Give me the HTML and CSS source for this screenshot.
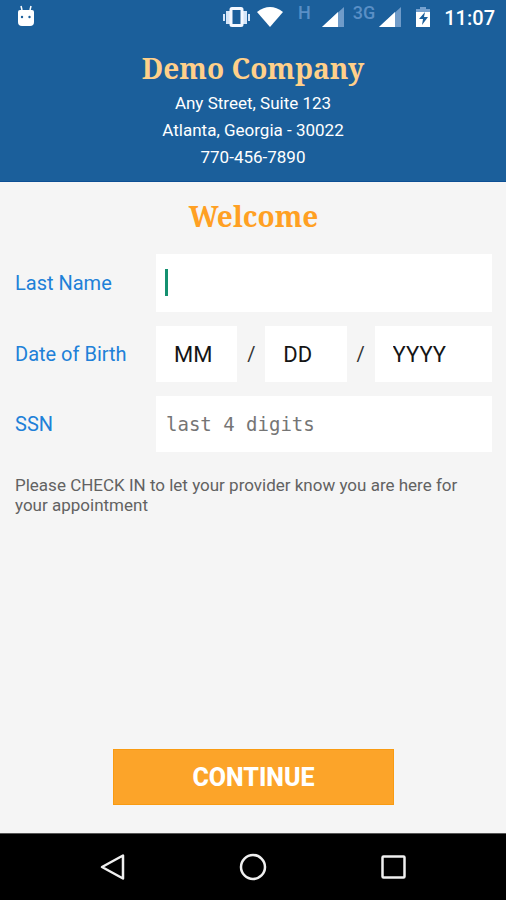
FILE: index.html
```html
<!DOCTYPE html>
<html lang="en">
<head>
<meta charset="utf-8">
<meta name="viewport" content="width=device-width, initial-scale=1">
<title>Check In</title>
<link rel="stylesheet" href="styles.css">
</head>
<body>
<div class="screen">
  <header class="header">
    <div class="status">
      <svg class="droid" width="18" height="22" viewBox="0 0 18 22" aria-hidden="true">
        <path d="M4 1l1 4M14 1l-1 4" stroke="#fff" stroke-width="1.5"/>
        <path d="M3 5h12a2 2 0 0 1 2 2v10a4 4 0 0 1-4 4H5a4 4 0 0 1-4-4V7a2 2 0 0 1 2-2z" fill="#fff"/>
        <circle cx="5" cy="12" r="1.2" fill="#1b5f9b"/><circle cx="12.500" cy="12" r="1.2" fill="#1b5f9b"/>
      </svg>
      <div class="indicators">
        <svg width="28" height="22" viewBox="0 0 28 22" aria-hidden="true">
          <path fill="#d5e5f8" d="M0 8h2v7H0zM3 5h4v13H3zM20 5h4v13h-4zM25 8h2v7h-2z"/>
          <rect x="8" y="2.500" width="11" height="17" rx="1" fill="none" stroke="#f4f8ff" stroke-width="3"/>
        </svg>
        <svg class="wifi" width="26" height="22" viewBox="0 0 26 22" aria-hidden="true"><path fill="#fff" d="M0 6Q13-4 26 6L13 21z"/></svg>
        <span class="network">H</span>
        <svg class="signal" width="22" height="22" viewBox="0 0 22 22" aria-hidden="true"><path fill="#6f9bc9" d="M22 1v20H0z"/><path fill="#fff" d="M16 6v15H0z"/></svg>
        <span class="network">3G</span>
        <svg class="signal" width="22" height="22" viewBox="0 0 22 22" aria-hidden="true"><path fill="#6f9bc9" d="M22 1v20H0z"/><path fill="#fff" d="M16 6v15H0z"/></svg>
        <svg class="battery" width="16" height="22" viewBox="0 0 16 22" aria-hidden="true">
          <path fill="#76a1cf" d="M5 1h6v2h4v4H1V3h4z"/><path fill="#fff" d="M1 6h14v15H1z"/>
          <path fill="#1b5f9b" d="M10 6l-6 7h4l-1 6 6-8H9z"/>
        </svg>
        <time class="clock">11:07</time>
      </div>
    </div>
    <h1 class="company">Demo Company</h1>
    <address class="address">Any Street, Suite 123<br>Atlanta, Georgia - 30022<br>770-456-7890</address>
  </header>
  <main class="main">
    <h2 class="welcome">Welcome</h2>
    <form class="form">
      <label class="label" for="last">Last Name</label>
      <div class="field"><input class="input first" id="last" type="text"><span class="caret"></span></div>
      <label class="label" for="month">Date of Birth</label>
      <div class="date">
        <input class="input part" id="month" type="text" placeholder="MM">
        <span class="slash">/</span>
        <input class="input part" type="text" placeholder="DD" aria-label="Day of birth">
        <span class="slash">/</span>
        <input class="input part" type="text" placeholder="YYYY" aria-label="Year of birth">
      </div>
      <label class="label" for="ssn">SSN</label>
      <input class="input ssn" id="ssn" type="text" placeholder="last 4 digits">
      <p class="note">Please CHECK IN to let your provider know you are here for your appointment</p>
      <button class="continue" type="button">CONTINUE</button>
    </form>
  </main>
  <nav class="nav">
    <button class="key" type="button" aria-label="Back"><svg width="28" height="28" viewBox="0 0 28 28"><path d="M24 2.500v23L3 14z" fill="none" stroke="#f0f0f0" stroke-width="2.500" stroke-linejoin="round"/></svg></button>
    <button class="key" type="button" aria-label="Home"><svg width="28" height="28" viewBox="0 0 28 28"><circle cx="14" cy="14" r="12" fill="none" stroke="#f0f0f0" stroke-width="2.500"/></svg></button>
    <button class="key" type="button" aria-label="Overview"><svg width="28" height="28" viewBox="0 0 28 28"><rect x="3.500" y="3.500" width="22" height="21" rx="1" fill="none" stroke="#f0f0f0" stroke-width="2.500"/></svg></button>
  </nav>
</div>
</body>
</html>
```
FILE: styles.css
```css
* { box-sizing: border-box; }
body { margin: 0; font-family: Roboto, sans-serif; background: #f5f5f5; }
svg { display: block; }
.screen { min-height: 100vh; display: flex; flex-direction: column; }
.header { background: #1b5f9b; color: #fff; text-align: center; padding-bottom: 10px; border-bottom: 1px solid #0c4f94; }
.status { display: flex; justify-content: space-between; align-items: center; height: 34px; padding: 0 11px 0 17px; }
.droid { margin-bottom: 2px; }
.indicators { display: flex; align-items: center; }
.wifi { margin: 0 15px 0 6px; }
.network { font-size: 18px; font-weight: 500; line-height: 20px; color: #5a8fc6; margin-bottom: 8px; }
.signal { margin: 0 9px 0 11px; }
.network ~ .network + .signal { margin: 0 14px 0 4px; }
.battery { margin-right: 13px; }
.clock { font-size: 20px; font-weight: 500; line-height: 24px; margin-top: 2px; }
.company, .welcome { margin: 0; font-family: "Noto Serif", "DejaVu Serif Condensed", "DejaVu Serif", serif; font-size: 28px; font-weight: 700; line-height: 40px; }
.company { padding-top: 12px; line-height: 44px; color: #ffd08a; }
.address { font-style: normal; font-size: 17px; line-height: 27px; }
.main { flex: 1; display: flex; flex-direction: column; padding: 14px 14px 28px 15px; }
.welcome { color: #ffa023; text-align: center; margin-bottom: 18px; }
.form { flex: 1; display: grid; grid-template-columns: 141px 1fr; grid-template-rows: auto auto auto auto 1fr; row-gap: 14px; }
.label { align-self: center; color: #2080d8; font-size: 20px; line-height: 24px; }
.field { position: relative; }
.input { display: block; width: 100%; min-width: 0; height: 56px; border: 0; border-radius: 0; background: #fff; padding: 0 10px; font-family: Roboto, sans-serif; font-size: 22px; color: #151515; outline: none; }
.input::placeholder { color: #151515; opacity: 1; }
.first { height: 58px; }
.caret { position: absolute; left: 9px; top: 15px; width: 3px; height: 27px; background: #149070; }
.date { display: grid; grid-template-columns: 81fr 28px 81fr 28px 117fr; align-items: center; }
.part { padding: 0 0 0 18px; }
.slash { text-align: center; font-size: 20px; color: #333; }
.ssn { font-family: "DejaVu Sans Mono", monospace; font-size: 19px; }
.ssn::placeholder { color: #757575; }
.note { grid-column: 1 / -1; margin: 9px 0 0; padding-right: 20px; font-size: 17px; line-height: 20px; color: #626262; }
.continue { grid-column: 1 / -1; align-self: end; justify-self: center; width: 59%; height: 56px; border: 1px solid #f99b12; background: #fca429; color: #fff; font-family: Roboto, sans-serif; font-size: 25px; font-weight: 800; padding: 0; }
.nav { display: flex; justify-content: center; gap: 112px; align-items: center; height: 67px; background: #000; border-top: 1px solid #555; }
.key { background: none; border: 0; padding: 0; }
```
